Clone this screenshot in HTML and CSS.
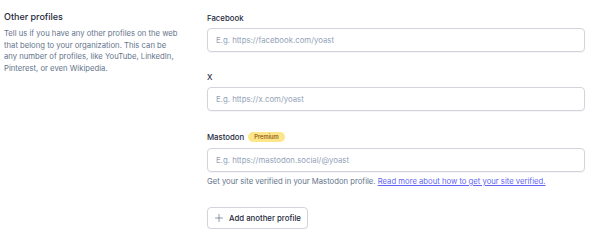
FILE: index.html
```html
<!DOCTYPE html>
<html lang="en">
<head>
  <meta charset="UTF-8" />
  <meta name="viewport" content="width=device-width, initial-scale=1.0"/>
  <title>Other profiles</title>
  <link rel="stylesheet" href="styles.css">
</head>
<body>

  <!-- OTHER PROFILES -->
  <section class="secao">
    <div class="intro">
      <h2>Other profiles</h2>
      <p>Tell us if you have any other profiles on the web<br>
        that belong to your organization. This can be<br>
        any number of profiles, like YouTube, LinkedIn,<br>
        Pinterest, or even Wikipedia.</p>
    </div>

    <div class="campos">
      <div class="campo">
        <label for="facebook">Facebook</label>
        <input type="text" id="facebook" placeholder="E.g. https://facebook.com/yoast">
      </div>

      <div class="campo">
        <label for="twitter">X</label>
        <input type="text" id="twitter" placeholder="E.g. https://x.com/yoast">
      </div>

      <div class="campo">
        <label for="mastodon" class="com-selo">Mastodon <span class="selo">Premium</span></label>
        <input type="text" id="mastodon" placeholder="E.g. https://mastodon.social/@yoast">
        <p class="ajuda">Get your site verified in your Mastodon profile. <a href="#">Read more about how to get your site verified.</a></p>
      </div>

      <button type="button" class="botao-add">
        <svg viewBox="0 0 20 20" width="10" height="10" fill="none" stroke="currentColor" stroke-width="1.5" stroke-linecap="round">
          <path d="M10 3v14M3 10h14"/>
        </svg>
        Add another profile
      </button>
    </div>
  </section>

</body>
</html>
```

FILE: styles.css
```css
body {
  margin: 0;
  font-family: Inter, "Noto Sans", Arial, sans-serif;
  background: #ffffff;
  color: #1e293b;
}

.secao {
  display: grid;
  grid-template-columns: 186px 1fr;
  column-gap: 17px;
  padding: 10px 15px 0 4px;
}

.intro h2 {
  margin: 0 0 4px 0;
  font-size: 9px;
  line-height: 14px;
  font-weight: 500;
  color: #1e293b;
}

.intro p {
  margin: 0;
  font-size: 7.7px;
  line-height: 11.7px;
  color: #64748b;
}

.campos {
  display: flex;
  flex-direction: column;
  align-items: flex-start;
  padding-top: 2px;
}

.campo {
  width: 100%;
  margin-bottom: 19px;
}

.campo label {
  display: flex;
  align-items: center;
  gap: 4px;
  height: 12px;
  margin-bottom: 4px;
  font-size: 7.8px;
  font-weight: 500;
  color: #1e293b;
}

.campo label.com-selo {
  height: 14px;
}

.selo {
  display: inline-block;
  padding: 0 6px;
  height: 9.5px;
  line-height: 9.5px;
  border-radius: 999px;
  background-color: #fde68a;
  color: #854d0e;
  font-size: 5.8px;
  font-weight: 500;
}

.campo input {
  display: block;
  box-sizing: border-box;
  width: 100%;
  height: 24px;
  margin: 0;
  padding: 0 8px;
  border: 1px solid #d1d5db;
  border-radius: 4px;
  box-shadow: 0 1px 1px rgba(0, 0, 0, 0.04);
  font-family: inherit;
  font-size: 7.8px;
  color: #1e293b;
}

.campo input::placeholder {
  color: #94a3b8;
}

.ajuda {
  margin: 4px 0 0 0;
  font-size: 7.7px;
  line-height: 12px;
  color: #64748b;
}

.ajuda a {
  color: #6366f1;
  text-decoration: underline;
}

.botao-add {
  display: flex;
  align-items: center;
  gap: 5px;
  box-sizing: border-box;
  height: 22px;
  padding: 0 6px 0 6px;
  background: #ffffff;
  border: 1px solid #d1d5db;
  border-radius: 4px;
  box-shadow: 0 1px 1px rgba(0, 0, 0, 0.05);
  font-family: inherit;
  font-size: 7.8px;
  font-weight: 500;
  color: #1e293b;
  cursor: pointer;
}

.botao-add svg {
  color: #64748b;
}
```
